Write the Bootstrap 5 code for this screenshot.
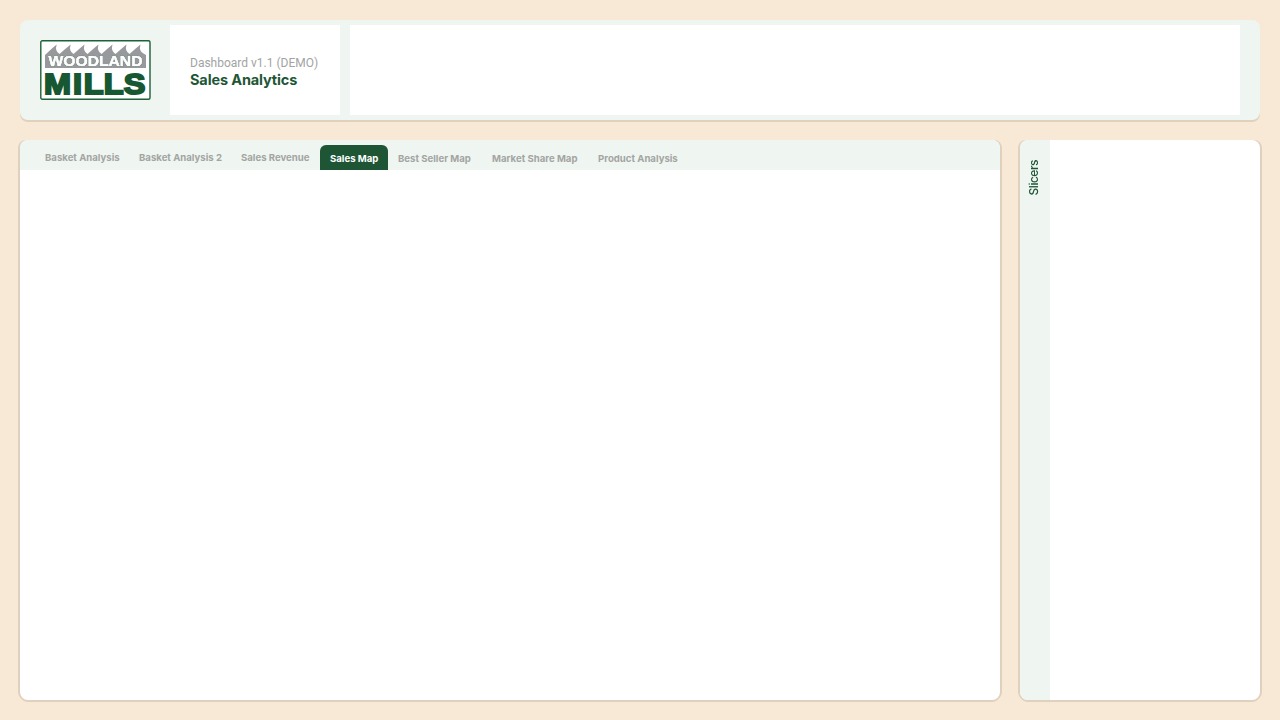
<!DOCTYPE html>
<html lang="en">
<head>
<meta charset="utf-8">
<meta name="viewport" content="width=device-width, initial-scale=1">
<title>Sales Analytics</title>
<link href="https://cdn.jsdelivr.net/npm/bootstrap@5.3.0/dist/css/bootstrap.min.css" rel="stylesheet">
<style>
:root { --brand: #1e5635; --mint: #eff5f1; --edge: #e0d1be; }
body { background: #f8e9d7; font-family: Inter, sans-serif; height: 720px; overflow: hidden; }
.dash { height: 720px; padding: 20px; gap: 20px; }
.bar-top { height: 100px; padding: 5px 20px; gap: 10px; background: var(--mint); border-radius: 8px; box-shadow: 0 2px 0 var(--edge); }
.logo-box { width: 120px; }
.logo-name { filter: drop-shadow(0 0 .6px #3f5a49) drop-shadow(0 0 .4px #3f5a49); }
.title-box { width: 170px; padding: 5px 20px 0; }
.version { font: 400 12px/14px Roboto, sans-serif; color: #a3a3a3; white-space: nowrap; }
.title { font-size: 14.500px; font-weight: 700; line-height: 20px; color: var(--brand); letter-spacing: -.14px; margin: 0; }
.panels { gap: 20px; }
.panel { border-radius: 8px; box-shadow: -2px 0 0 var(--edge), 2px 0 0 var(--edge), 0 2px 0 var(--edge), -1px 1px 0 var(--edge), 1px 1px 0 var(--edge); }
.panel-in { border-radius: 8px; overflow: hidden; }
.side { width: 240px; }
.tabs { display: grid; grid-template-columns: 94px 102px 89px 68px 94px 106px 100px; height: 30px; padding: 5px 15px 0; background: var(--mint); }
.tabs .nav-link { padding: 0 10px; height: 25px; font-size: 9.600px; font-weight: 700; line-height: 28px; color: #a3a5a3; white-space: nowrap; border-radius: 6px 6px 0 0; }
.tabs .up { line-height: 26px; }
.tabs .nav-link.active { background: var(--brand); color: #fff; }
.rail { width: 30px; background: var(--mint); padding-top: 20px; }
.rail span { writing-mode: vertical-rl; transform: rotate(180deg); font-size: 12px; line-height: 16px; font-weight: 500; letter-spacing: -.5px; color: var(--brand); margin-right: 3px; }
</style>
</head>
<body>
<div class="dash d-flex flex-column">
  <header class="bar-top d-flex">
    <div class="logo-box d-flex align-items-center">
      <svg width="111" height="60" viewBox="0 0 111 60" role="img" aria-label="Woodland Mills">
        <rect x=".8" y=".8" width="109.2" height="58.4" rx="1.5" fill="#fff" stroke="#1e6038" stroke-width="1.4"/>
        <path fill="#98999c" d="M5 28V15Q11 9 16.700 4.500Q14.500 11 19.500 14Q25 9 30.700 4.500Q28.500 11 33.500 14Q39 9 44.500 4.500Q42.500 11 47.500 14Q53 9 58.500 4.500Q56.500 11 61.500 14Q67 9 72.500 4.500Q70.500 11 75.500 14Q81 9 86.500 4.500Q84.500 11 89.500 14Q95 9 100.500 4.500Q98.500 11 103.500 13.500L106 15V28Z"/>
        <g font-family="Liberation Sans, sans-serif" font-weight="700">
          <text class="logo-name" x="8.500" y="26" font-size="14.300" textLength="94" lengthAdjust="spacingAndGlyphs" fill="#fff" stroke="#fff" stroke-width=".7">WOODLAND</text>
          <text transform="scale(1.08 1)" x="3.700 30.600 40.500 59 77.500" y="54.300" font-size="30" fill="#175731" stroke="#175731" stroke-width="2">MILLS</text>
        </g>
      </svg>
    </div>
    <div class="title-box bg-white d-flex flex-column justify-content-center">
      <div class="version">Dashboard v1.1 (DEMO)</div>
      <h1 class="title">Sales Analytics</h1>
    </div>
    <div class="bg-white flex-grow-1"></div>
  </header>
  <main class="panels d-flex flex-grow-1">
    <section class="panel flex-grow-1 bg-white">
      <div class="panel-in h-100">
        <nav class="tabs">
          <a class="nav-link up">Basket Analysis</a>
          <a class="nav-link up">Basket Analysis 2</a>
          <a class="nav-link up">Sales Revenue</a>
          <a class="nav-link active">Sales Map</a>
          <a class="nav-link">Best Seller Map</a>
          <a class="nav-link">Market Share Map</a>
          <a class="nav-link">Product Analysis</a>
        </nav>
      </div>
    </section>
    <aside class="panel side bg-white">
      <div class="panel-in h-100 d-flex">
        <div class="rail d-flex justify-content-center align-items-start"><span>Slicers</span></div>
      </div>
    </aside>
  </main>
</div>
<script src="https://cdn.jsdelivr.net/npm/bootstrap@5.3.0/dist/js/bootstrap.bundle.min.js"></script>
</body>
</html>
